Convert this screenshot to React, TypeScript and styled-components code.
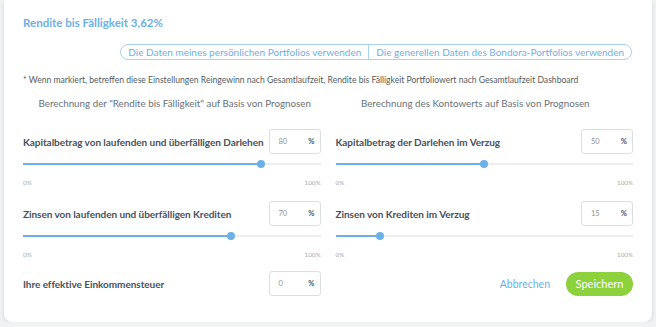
import React from "react";
import styled, { createGlobalStyle } from "styled-components";

const GlobalStyle = createGlobalStyle`
    html, body {
        margin: 0;
        padding: 0;
        background: #f1f2f3;
        font-family: "Lato", "Liberation Sans", sans-serif;
    }
`;

const BLUE = "#6cb1e6";

const Card = styled.div`
    box-sizing: border-box;
    width: 648px;
    height: 322px;
    margin: 0 4px;
    background: #fff;
    border-radius: 0 0 8px 8px;
    box-shadow: 0 1px 4px rgba(0, 0, 0, 0.12);
    padding: 15px 19px 0 19px;
    display: flex;
    flex-direction: column;
`;

const Title = styled.h1`
    margin: 0;
    font-size: 11.5px;
    line-height: 16px;
    font-weight: 700;
    color: ${BLUE};
`;

const ToggleRow = styled.div`
    display: flex;
    justify-content: flex-end;
    margin-top: 13px;
    padding-right: 1px;
`;

const Toggle = styled.div`
    display: flex;
    border: 1px solid #a9d2f2;
    border-radius: 9px;
    height: 14px;
    overflow: hidden;
`;

const ToggleItem = styled.button<{ $last?: boolean }>`
    border: none;
    background: none;
    padding: 0 7px;
    font-family: inherit;
    font-size: 10px;
    line-height: 14px;
    color: ${BLUE};
    border-right: ${({ $last }) => ($last ? "none" : "1px solid #a9d2f2")};
    cursor: pointer;
    white-space: nowrap;
`;

const Note = styled.p`
    margin: 14px 0 0 0;
    font-size: 8.6px;
    line-height: 12px;
    color: #555b60;
    white-space: nowrap;
`;

const SubHeads = styled.div`
    display: grid;
    grid-template-columns: 1fr 1fr;
    column-gap: 15px;
    margin-top: 10px;
`;

const SubHead = styled.div<{ $shift?: number }>`
    text-align: center;
    font-size: 9.8px;
    line-height: 14px;
    color: #6a7177;
    white-space: nowrap;
    padding-left: ${({ $shift }) => ($shift && $shift < 0 ? -$shift : 0)}px;
    padding-right: ${({ $shift }) => ($shift && $shift > 0 ? $shift : 0)}px;
`;

const Fields = styled.div`
    display: grid;
    grid-template-columns: 1fr 1fr;
    column-gap: 15px;
    margin-top: 19px;
`;

const Field = styled.div`
    display: flex;
    flex-direction: column;
    height: 72px;
`;

const FieldHead = styled.div<{ $lift?: number }>`
    display: flex;
    align-items: center;
    justify-content: space-between;
    height: 25px;
    flex: none;
    margin-top: ${({ $lift }) => ($lift ? -$lift : 0)}px;
`;

const Label = styled.span`
    font-size: 10px;
    font-weight: 700;
    letter-spacing: -0.05px;
    color: #48515a;
    white-space: nowrap;
`;

const InputBox = styled.div`
    box-sizing: border-box;
    width: 52px;
    height: 25px;
    border: 1px solid #dcdfe2;
    border-radius: 3px;
    display: flex;
    align-items: center;
    justify-content: space-between;
    padding: 0 5px 0 9px;
    font-size: 7.5px;
`;

const InputValue = styled.span`
    color: #8b9297;
`;

const Unit = styled.span`
    color: #4c555d;
    font-weight: 700;
`;

const SliderWrap = styled.div`
    position: relative;
    height: 19px;
    flex: none;
`;

const Track = styled.div`
    position: absolute;
    left: 0;
    right: 0;
    top: 9px;
    height: 2px;
    background: #ebedef;
`;

const Fill = styled.div`
    position: absolute;
    left: 0;
    top: 9px;
    height: 2px;
    background: ${BLUE};
`;

const Thumb = styled.div`
    position: absolute;
    top: 6px;
    width: 8px;
    height: 8px;
    margin-left: -4px;
    border-radius: 50%;
    background: ${BLUE};
`;

const Scale = styled.div`
    display: flex;
    justify-content: space-between;
    height: 18px;
    padding-top: 0;
    box-sizing: border-box;
    align-items: center;
    font-size: 6.3px;
    color: #a7acb0;
`;

const Actions = styled.div`
    display: flex;
    align-items: center;
    justify-content: flex-end;
    gap: 16px;
    height: 25px;
    margin-top: -2px;
`;

const Cancel = styled.button`
    border: none;
    background: none;
    padding: 0;
    font-family: inherit;
    font-size: 10.5px;
    color: ${BLUE};
    cursor: pointer;
`;

const Save = styled.button`
    border: none;
    background: #8dd23c;
    color: #fff;
    font-family: inherit;
    font-size: 11px;
    width: 67px;
    height: 24px;
    border-radius: 12px;
    cursor: pointer;
`;

type SliderFieldProps = { label: string; value: number };

function PercentInput({ value }: { value: number }) {
    return (
        <InputBox>
            <InputValue>{value}</InputValue>
            <Unit>%</Unit>
        </InputBox>
    );
}

function SliderField({ label, value }: SliderFieldProps) {
    return (
        <Field>
            <FieldHead>
                <Label>{label}</Label>
                <PercentInput value={value} />
            </FieldHead>
            <SliderWrap>
                <Track />
                <Fill style={{ width: value + "%" }} />
                <Thumb style={{ left: value + "%" }} />
            </SliderWrap>
            <Scale>
                <span>0%</span>
                <span>100%</span>
            </Scale>
        </Field>
    );
}

export default function App() {
    return (
        <>
            <GlobalStyle />
            <Card>
                <Title>Rendite bis Fälligkeit 3,62%</Title>
                <ToggleRow>
                    <Toggle>
                        <ToggleItem>Die Daten meines persönlichen Portfolios verwenden</ToggleItem>
                        <ToggleItem $last>Die generellen Daten des Bondora-Portfolios verwenden</ToggleItem>
                    </Toggle>
                </ToggleRow>
                <Note>
                    * Wenn markiert, betreffen diese Einstellungen Reingewinn nach Gesamtlaufzeit, Rendite bis Fälligkeit Portfoliowert nach Gesamtlaufzeit Dashboard
                </Note>
                <SubHeads>
                    <SubHead $shift={-6}>Berechnung der "Rendite bis Fälligkeit" auf Basis von Prognosen</SubHead>
                    <SubHead $shift={18}>Berechnung des Kontowerts auf Basis von Prognosen</SubHead>
                </SubHeads>
                <Fields>
                    <SliderField label="Kapitalbetrag von laufenden und überfälligen Darlehen" value={80} />
                    <SliderField label="Kapitalbetrag der Darlehen im Verzug" value={50} />
                    <SliderField label="Zinsen von laufenden und überfälligen Krediten" value={70} />
                    <SliderField label="Zinsen von Krediten im Verzug" value={15} />
                    <FieldHead $lift={2}>
                        <Label>Ihre effektive Einkommensteuer</Label>
                        <PercentInput value={0} />
                    </FieldHead>
                    <Actions>
                        <Cancel>Abbrechen</Cancel>
                        <Save>Speichern</Save>
                    </Actions>
                </Fields>
            </Card>
        </>
    );
}
